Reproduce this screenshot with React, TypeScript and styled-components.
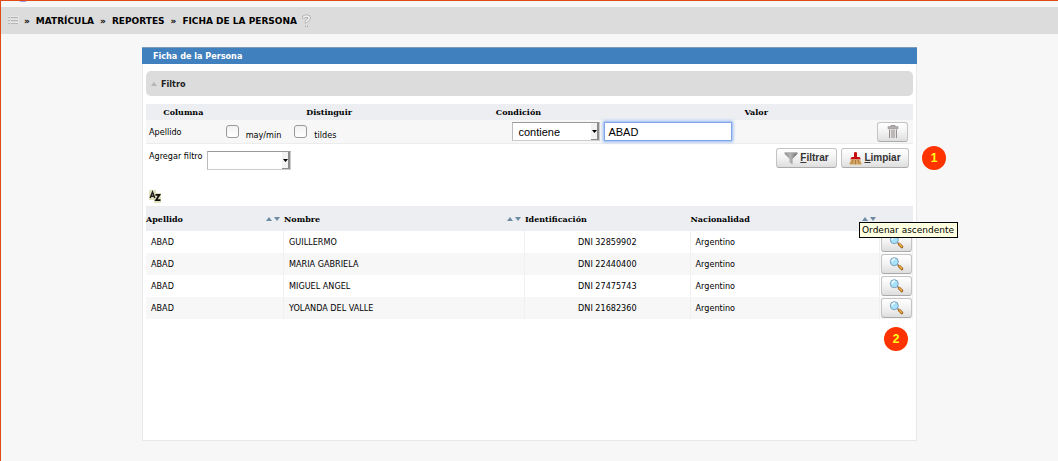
import React from "react";
import styled, { createGlobalStyle } from "styled-components";

const sans = '"DejaVu Sans Condensed", "DejaVu Sans", sans-serif';
const serif = '"DejaVu Serif", serif';

const GlobalStyle = createGlobalStyle`
  * { box-sizing: border-box; }
  body { margin: 0; background: #f7f7f7; color: #000; font: 9px/12px ${sans}; }
`;

const Page = styled.div`
  min-height: 100vh;
  border-top: 1px solid #e14a12;
  border-left: 1px solid #e14a12;
`;

const TopStrip = styled.header`
  display: flex;
  height: 6px;
  padding-left: 18px;
`;

const Crumbs = styled.nav`
  display: flex;
  align-items: center;
  gap: 5px;
  height: 27px;
  padding-left: 7px;
  background: #dcdcdc;
  font: bold 9px/14px "DejaVu Sans", sans-serif;
`;

const Trail = styled.span`
  display: flex;
  gap: 6px;
`;

const Panel = styled.section`
  position: relative;
  width: 100%;
  max-width: 775px;
  min-height: 394px;
  margin: 13px auto 20px;
  border: 1px solid #e8e8e8;
  background: #fff;
`;

const PanelTitle = styled.h1`
  margin: -1px -1px 0;
  height: 17px;
  padding-left: 11px;
  border-top: 1px solid #7f9cba;
  background: #4180be;
  color: #fff;
  font: bold 9px/16px ${sans};
`;

const PanelBody = styled.div`
  padding: 7px 3px 0;
`;

const FilterHeading = styled.h2`
  display: flex;
  align-items: center;
  gap: 4px;
  height: 25px;
  margin: 0 0 8px;
  padding-left: 5px;
  border-radius: 5px;
  background: #dcdcdc;
  color: #222;
  font: bold 9px/12px ${sans};
`;

const Table = styled.table`
  width: 100%;
  border-spacing: 0;
  table-layout: fixed;
`;

const Col = styled.col<{ $w: string }>`
  width: ${(p) => p.$w};
`;

const FilterTh = styled.th`
  height: 16px;
  padding: 0 2px 0 0;
  background: #eceef2;
  font: bold 8px/12px ${serif};
`;

const FilterTd = styled.td<{ $right?: boolean }>`
  height: 24px;
  padding: ${(p) => (p.$right ? "0 1px 0 0" : "0 5px 0 3px")};
  background: #f7f7f7;
  border-bottom: 1px solid #ececec;
  text-align: ${(p) => (p.$right ? "right" : "left")};
`;

const Line = styled.div<{ $gap?: number; $between?: boolean }>`
  display: flex;
  align-items: center;
  justify-content: ${(p) => (p.$between ? "space-between" : "flex-start")};
  gap: ${(p) => p.$gap ?? 4}px;
`;

const CheckLabel = styled.label`
  display: flex;
  align-items: center;
  gap: 7px;
  line-height: 12px;

  span { padding-top: 7px; }
`;

const Check = styled.input`
  appearance: none;
  width: 13px;
  height: 13px;
  margin: 0;
  border: 1px solid #999;
  border-radius: 3px;
  background: linear-gradient(#f2f2f2, #fff);
`;

const SelectBox = styled.span<{ $w: number }>`
  position: relative;
  display: inline-block;
  width: ${(p) => p.$w}px;
  height: 19px;
  vertical-align: middle;
`;

const Select = styled.select`
  appearance: none;
  display: block;
  width: 100%;
  height: 100%;
  padding: 0 5px;
  border: 1px solid #ccc;
  border-top-color: #999;
  border-left-color: #bbb;
  border-radius: 0;
  background: #fff;
  color: #000;
  font: 11px/16px "Liberation Sans", sans-serif;
`;

const Arrow = styled.svg`
  position: absolute;
  top: 1px;
  right: 1px;
  pointer-events: none;
`;

const TextInput = styled.input`
  display: block;
  width: 128px;
  height: 19px;
  padding: 0 3px;
  border: 1px solid #7fa5e8;
  outline: none;
  box-shadow: 0 0 3px 1px #8bb1f5;
  background: #fff;
  color: #000;
  font: 11px/16px "Liberation Sans", sans-serif;
`;

const Button = styled.button<{ $w: number }>`
  display: inline-flex;
  align-items: center;
  justify-content: center;
  gap: 2px;
  width: ${(p) => p.$w}px;
  height: 20px;
  padding: 0;
  border: 1px solid #c4c4c4;
  border-bottom-color: #aaa;
  border-radius: 3px;
  background: linear-gradient(#fff, #f4f4f4 45%, #dedede);
  color: #333;
  font: bold 10px/14px "Liberation Sans", sans-serif;
  vertical-align: middle;
`;

const Actions = styled.div`
  position: relative;
  display: flex;
  align-items: flex-start;
  justify-content: space-between;
  height: 62px;
  padding: 4px 4px 0 3px;
`;

const AddFilter = styled.label`
  display: flex;
  align-items: flex-start;
  gap: 5px;
  line-height: 16px;

  ${SelectBox} { margin-top: 3px; }
`;

const SortButton = styled.button`
  position: absolute;
  left: 3px;
  bottom: 3px;
  display: flex;
  padding: 0;
  border: 0;
  background: none;
`;

const ResultTh = styled.th`
  height: 25px;
  padding: 0 4px 0 0;
  background: #eceef2;
  text-align: left;
  font: bold 8px/12px ${serif};
`;

const ResultRow = styled.tr`
  &:nth-child(even) { background: #f7f7f7; }
`;

const ResultTd = styled.td<{ $tight?: boolean; $right?: boolean }>`
  height: 22px;
  padding: ${(p) => (p.$tight ? "0 1px" : p.$right ? "0 53px 0 5px" : "0 5px")};
  border-right: 1px solid #f0f0f0;
  text-align: ${(p) => (p.$right ? "right" : "left")};
`;

const LastTh = styled(ResultTh)`
  position: relative;
  padding: 0;
`;

const Tooltip = styled.span`
  position: absolute;
  z-index: 2;
  top: 16px;
  left: -21px;
  padding: 0 3px 0 2px;
  border: 1px solid #000;
  background: #ffffe1;
  white-space: nowrap;
  font: 9px/14px "DejaVu Sans", sans-serif;
`;

const Badge = styled.span<{ $top: number; $right: number }>`
  position: absolute;
  top: ${(p) => p.$top}px;
  right: ${(p) => p.$right}px;
  width: 24px;
  height: 24px;
  border-radius: 50%;
  background: #ff3300;
  color: #ffff1a;
  text-align: center;
  font: bold 12px/24px "Liberation Sans", sans-serif;
`;

const Results = styled.div`
  position: relative;
`;

const DropArrow = () => (
  <Arrow width="8" height="17" viewBox="0 0 8 17">
    <path d="M0 0h8v17H0z" fill="#f2f2f2" />
    <path d="M6 0h2v17H0v-1h6z" fill="#8c8c8c" />
    <path d="M1 7h5L3.500 10z" fill="#000" />
  </Arrow>
);

const SortArrows = () => (
  <svg width="14" height="6" viewBox="0 0 14 6" fill="#6e8ba4">
    <path d="M3 1l3 4H0z" />
    <path d="M8 1h6l-3 4z" />
  </svg>
);

const ListIcon = () => (
  <svg width="11" height="10" viewBox="0 0 11 10">
    {[0, 3, 6].map((y) => (
      <g key={y}>
        <path d={`M0 ${y}h2v2H0zM3 ${y}h8v2H3z`} fill="#e6e6e6" />
        <path d={`M0 ${y + 1}h2v1H0zM3 ${y + 1}h7v1H3z`} fill="#b5b5b5" />
      </g>
    ))}
  </svg>
);

const HelpIcon = () => (
  <svg width="9" height="14" viewBox="0 0 9 14" fill="none">
    <path d="M1.500 4.500V3.500Q2 2 4.500 2T7.200 4Q7.200 5.500 5.500 6.500T4.500 9M4.500 11v2" stroke="#a5a5a5" strokeWidth="3" />
    <path d="M1.500 4V3.500Q2 2 4.500 2T7.200 4Q7.200 5.500 5.500 6.500T4.500 8.500M4.500 11v1.500" stroke="#f6f6f6" strokeWidth="1.600" />
  </svg>
);

const TrashIcon = () => (
  <svg width="12" height="14" viewBox="0 0 12 14">
    <path d="M4 2V.7h4V2" fill="none" stroke="#8b8585" />
    <path d="M1 1.700h10v2H1z" fill="#b9b3b3" stroke="#8b8585" strokeWidth=".6" />
    <path d="M2 4.300h8l-.5 9h-7z" fill="#e6e3e3" />
    <path d="M2.500 4.500v8.500M5 4.500v8.500M7 4.500v8.500M9.500 4.500v8.500" stroke="#8b8585" strokeWidth=".9" />
  </svg>
);

const FunnelIcon = () => (
  <svg width="14" height="13" viewBox="0 0 14 13">
    <defs>
      <linearGradient id="funnel">
        <stop offset="0" stopColor="#8a8a8a" />
        <stop offset=".45" stopColor="#b5b5b5" />
        <stop offset="1" stopColor="#666" />
      </linearGradient>
    </defs>
    <path d="M.5.5h13v1.300L8.500 7v5.500l-3-2V7L.5 1.800z" fill="url(#funnel)" />
    <path d="M1 .5h12v1H1z" fill="#aaa" />
  </svg>
);

const BroomIcon = () => (
  <svg width="13" height="13" viewBox="0 0 13 13">
    <path d="M5 .5Q6.500-.3 8 .5V5h2.500q1 0 1 2.500h-10Q1.500 5 3 5h2z" fill="#c70f0f" />
    <path d="M2 7.500h9l1.800 4.500-1.300 1-1.300-.7-1.200.7-1.200-.7-1.300.7-1.200-.7-1.200.7-1.400-.7-1.200.5L.2 12z" fill="#d7a765" />
    <path d="M4 8l-1.500 4M6.500 8v4M9 8l1.300 4" stroke="#936735" strokeWidth=".7" />
  </svg>
);

const LensIcon = () => (
  <svg width="15" height="14" viewBox="0 0 15 14">
    <path d="M8.300 7.300l1.700 1.700" stroke="#777" strokeWidth="1.500" />
    <path d="M10.300 9.300l2.500 2.500" stroke="#9b601a" strokeWidth="3" strokeLinecap="round" />
    <path d="M10.300 9l2.300 2.400" stroke="#f1b34c" strokeWidth="1.400" strokeLinecap="round" />
    <circle cx="5.300" cy="4.700" r="4" fill="#a6e3fa" stroke="#7c9db8" />
    <path d="M3 4.500Q3.500 2 6 2" stroke="#f3fdff" strokeWidth="1.300" fill="none" />
  </svg>
);

const SortIcon = () => (
  <svg width="13" height="13" viewBox="0 0 13 13">
    <path d="M0 0h7v3h5v10H5v-3H0z" fill="#e1e1bd" />
    <path d="M1.200 8L3.500 2 5.800 8M2 6.200h3" fill="none" stroke="#222" strokeWidth="1.500" />
    <path d="M6.500 4.800H10.500L7 10.200H11.500" fill="none" stroke="#111" strokeWidth="1.700" />
  </svg>
);

const crumbs = ["MATRÍCULA", "REPORTES", "FICHA DE LA PERSONA"];

const people = [
  ["GUILLERMO", "DNI 32859902"],
  ["MARIA GABRIELA", "DNI 22440400"],
  ["MIGUEL ANGEL", "DNI 27475743"],
  ["YOLANDA DEL VALLE", "DNI 21682360"],
];

const columns = [
  { name: "Apellido", sortable: true },
  { name: "Nombre", sortable: true },
  { name: "Identificación", sortable: false },
  { name: "Nacionalidad", sortable: true },
];

export default function App() {
  return (
    <>
      <GlobalStyle />
      <Page>
        <TopStrip>
          <svg width="8" height="2" viewBox="0 0 8 2"><path d="M0 0h8L6 1H2z" fill="#9a9ae6" /></svg>
        </TopStrip>
        <Crumbs>
          <ListIcon />
          <Trail>
            {crumbs.map((c) => (
              <React.Fragment key={c}>
                <span>»</span>
                <span>{c}</span>
              </React.Fragment>
            ))}
          </Trail>
          <HelpIcon />
        </Crumbs>
        <Panel>
          <PanelTitle>Ficha de la Persona</PanelTitle>
          <PanelBody>
            <FilterHeading>
              <svg width="6" height="4" viewBox="0 0 6 4"><path d="M3 0l3 4H0z" fill="#b5b5b5" /></svg>
              Filtro
            </FilterHeading>
            <Table>
              <colgroup>
                <Col $w="10%" />
                <Col $w="28%" />
                <Col $w="164px" />
                <Col $w="auto" />
              </colgroup>
              <thead>
                <tr>
                  <FilterTh>Columna</FilterTh>
                  <FilterTh>Distinguir</FilterTh>
                  <FilterTh>Condición</FilterTh>
                  <FilterTh>Valor</FilterTh>
                </tr>
              </thead>
              <tbody>
                <tr>
                  <FilterTd>Apellido</FilterTd>
                  <FilterTd>
                    <Line $gap={13}>
                      <CheckLabel><Check type="checkbox" /><span>may/min</span></CheckLabel>
                      <CheckLabel><Check type="checkbox" /><span>tildes</span></CheckLabel>
                    </Line>
                  </FilterTd>
                  <FilterTd $right>
                    <SelectBox $w={88}>
                      <Select aria-label="Condición" defaultValue="contiene">
                        <option>contiene</option>
                      </Select>
                      <DropArrow />
                    </SelectBox>
                  </FilterTd>
                  <FilterTd>
                    <Line $between>
                      <TextInput aria-label="Valor" defaultValue="ABAD" />
                      <Button $w={31} aria-label="Eliminar filtro"><TrashIcon /></Button>
                    </Line>
                  </FilterTd>
                </tr>
              </tbody>
            </Table>
            <Actions>
              <AddFilter>
                Agregar filtro
                <SelectBox $w={84}>
                  <Select defaultValue=""><option value="" /></Select>
                  <DropArrow />
                </SelectBox>
              </AddFilter>
              <Line>
                <Button $w={61}><FunnelIcon /><span><u>F</u>iltrar</span></Button>
                <Button $w={68}><BroomIcon /><span><u>L</u>impiar</span></Button>
              </Line>
              <SortButton aria-label="Ordenar"><SortIcon /></SortButton>
              <Badge $top={2} $right={-33}>1</Badge>
            </Actions>
            <Results>
              <Table>
                <colgroup>
                  <Col $w="18%" />
                  <Col $w="31.400%" />
                  <Col $w="21.600%" />
                  <Col $w="auto" />
                  <Col $w="33px" />
                </colgroup>
                <thead>
                  <tr>
                    {columns.map((c) => (
                      <ResultTh key={c.name}>
                        <Line $between>{c.name}{c.sortable && <SortArrows />}</Line>
                      </ResultTh>
                    ))}
                    <LastTh><Tooltip role="tooltip">Ordenar ascendente</Tooltip></LastTh>
                  </tr>
                </thead>
                <tbody>
                  {people.map(([name, id]) => (
                    <ResultRow key={id}>
                      <ResultTd>ABAD</ResultTd>
                      <ResultTd>{name}</ResultTd>
                      <ResultTd $right>{id}</ResultTd>
                      <ResultTd>Argentino</ResultTd>
                      <ResultTd $tight><Button $w={31} aria-label={`Ver ${name}`}><LensIcon /></Button></ResultTd>
                    </ResultRow>
                  ))}
                </tbody>
              </Table>
              <Badge $top={121} $right={5}>2</Badge>
            </Results>
          </PanelBody>
        </Panel>
      </Page>
    </>
  );
}
